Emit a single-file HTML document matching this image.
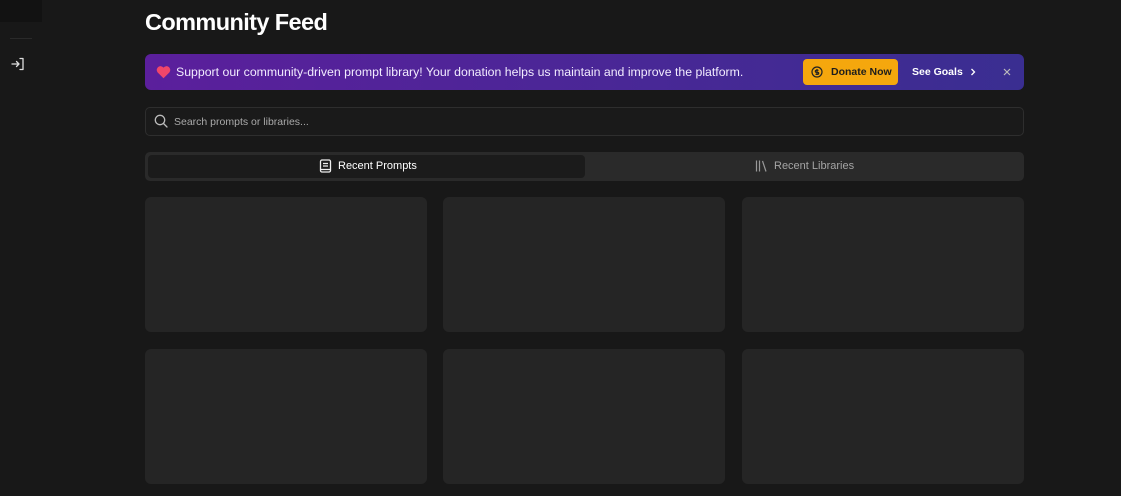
<!DOCTYPE html>
<html><head><style>
*{box-sizing:border-box;margin:0;padding:0}
body{width:1121px;height:496px;background:#181818;font-family:"Liberation Sans",sans-serif;color:#fff;position:relative;overflow:hidden}
.abs{position:absolute}
.card{position:absolute;width:282px;height:135px;background:#252525;border-radius:6px}
</style></head><body>
<div class="abs" style="left:0;top:0;width:42px;height:22px;background:#121212"></div>
<div class="abs" style="left:10px;top:38px;width:22px;height:1px;background:#2a2a2a"></div>
<svg class="abs" style="left:11px;top:57px" width="14" height="14" viewBox="0 0 14 14" fill="none" stroke="#ddd" stroke-width="1.3" stroke-linecap="round" stroke-linejoin="round"><path d="M1 7h7M5.5 4.5 8 7 5.5 9.5M9 1.5h3v11H9"/></svg>
<div class="abs" style="left:145px;top:9px;font-size:23.5px;font-weight:bold;letter-spacing:-0.6px">Community Feed</div>
<div class="abs" style="left:145px;top:54px;width:879px;height:36px;border-radius:6px;background:linear-gradient(90deg,#5b1f9c,#3a2e91)"></div>
<svg class="abs" style="left:156px;top:65px" width="15" height="14" viewBox="0 0 24 22"><path d="M12 21 2.5 11.5A5.5 5.5 0 0 1 12 4a5.5 5.5 0 0 1 9.5 7.5z" fill="#f0466a"/></svg>
<div class="abs" style="left:176px;top:65px;font-size:12.3px;color:#f2ecff">Support our community-driven prompt library! Your donation helps us maintain and improve the platform.</div>
<div class="abs" style="left:803px;top:59px;width:95px;height:26px;background:#f5a70d;border-radius:4px"></div>
<svg class="abs" style="left:811px;top:66px" width="12" height="12" viewBox="0 0 12 12" fill="none" stroke="#222" stroke-width="1.2"><circle cx="6" cy="6" r="5"/><path d="M7.5 4.3H5.3a1 1 0 0 0 0 2h1.4a1 1 0 0 1 0 2H4.5M6 3v6"/></svg>
<div class="abs" style="left:831px;top:66px;font-size:10.5px;font-weight:bold;color:#1d1d1d">Donate Now</div>
<div class="abs" style="left:912px;top:66px;font-size:10.5px;font-weight:bold;color:#fff">See Goals</div>
<svg class="abs" style="left:968px;top:67px" width="10" height="10" viewBox="0 0 10 10" fill="none" stroke="#fff" stroke-width="1.3"><path d="M3.5 2 6.5 5 3.5 8"/></svg>
<svg class="abs" style="left:1002px;top:67px" width="10" height="10" viewBox="0 0 10 10" fill="none" stroke="#bbb" stroke-width="1.2"><path d="M2 2l6 6M8 2 2 8"/></svg>
<div class="abs" style="left:145px;top:107px;width:879px;height:29px;border:1px solid #2e2e2e;border-radius:5px;background:#1a1a1a"></div>
<svg class="abs" style="left:154px;top:114px" width="14" height="14" viewBox="0 0 14 14" fill="none" stroke="#bbb" stroke-width="1.3" stroke-linecap="round"><circle cx="6" cy="6" r="4.7"/><path d="M9.5 9.5 13 13"/></svg>
<div class="abs" style="left:174px;top:116px;font-size:10.5px;color:#aaa">Search prompts or libraries...</div>
<div class="abs" style="left:145px;top:152px;width:879px;height:29px;background:#2a2a2a;border-radius:5px"></div>
<div class="abs" style="left:148px;top:155px;width:437px;height:23px;background:#1b1b1b;border-radius:4px"></div>
<svg class="abs" style="left:319px;top:159px" width="13" height="14" viewBox="0 0 13 14" fill="none" stroke="#eee" stroke-width="1.3"><rect x="1.5" y="1" width="10" height="12" rx="1.5"/><path d="M4 4.5h5M4 7h5M1.5 10.5h10"/></svg>
<div class="abs" style="left:338px;top:160px;font-size:11px;color:#fff">Recent Prompts</div>
<svg class="abs" style="left:755px;top:159px" width="14" height="14" viewBox="0 0 14 14" fill="none" stroke="#999" stroke-width="1.2"><path d="M1.5 1.5v11M4.5 1.5v11M7.5 2l3.5 10.5"/></svg>
<div class="abs" style="left:774px;top:160px;font-size:11px;color:#a5a5a5">Recent Libraries</div>
<div class="card" style="left:145px;top:197px"></div>
<div class="card" style="left:443px;top:197px"></div>
<div class="card" style="left:742px;top:197px"></div>
<div class="card" style="left:145px;top:349px"></div>
<div class="card" style="left:443px;top:349px"></div>
<div class="card" style="left:742px;top:349px"></div>
</body></html>
